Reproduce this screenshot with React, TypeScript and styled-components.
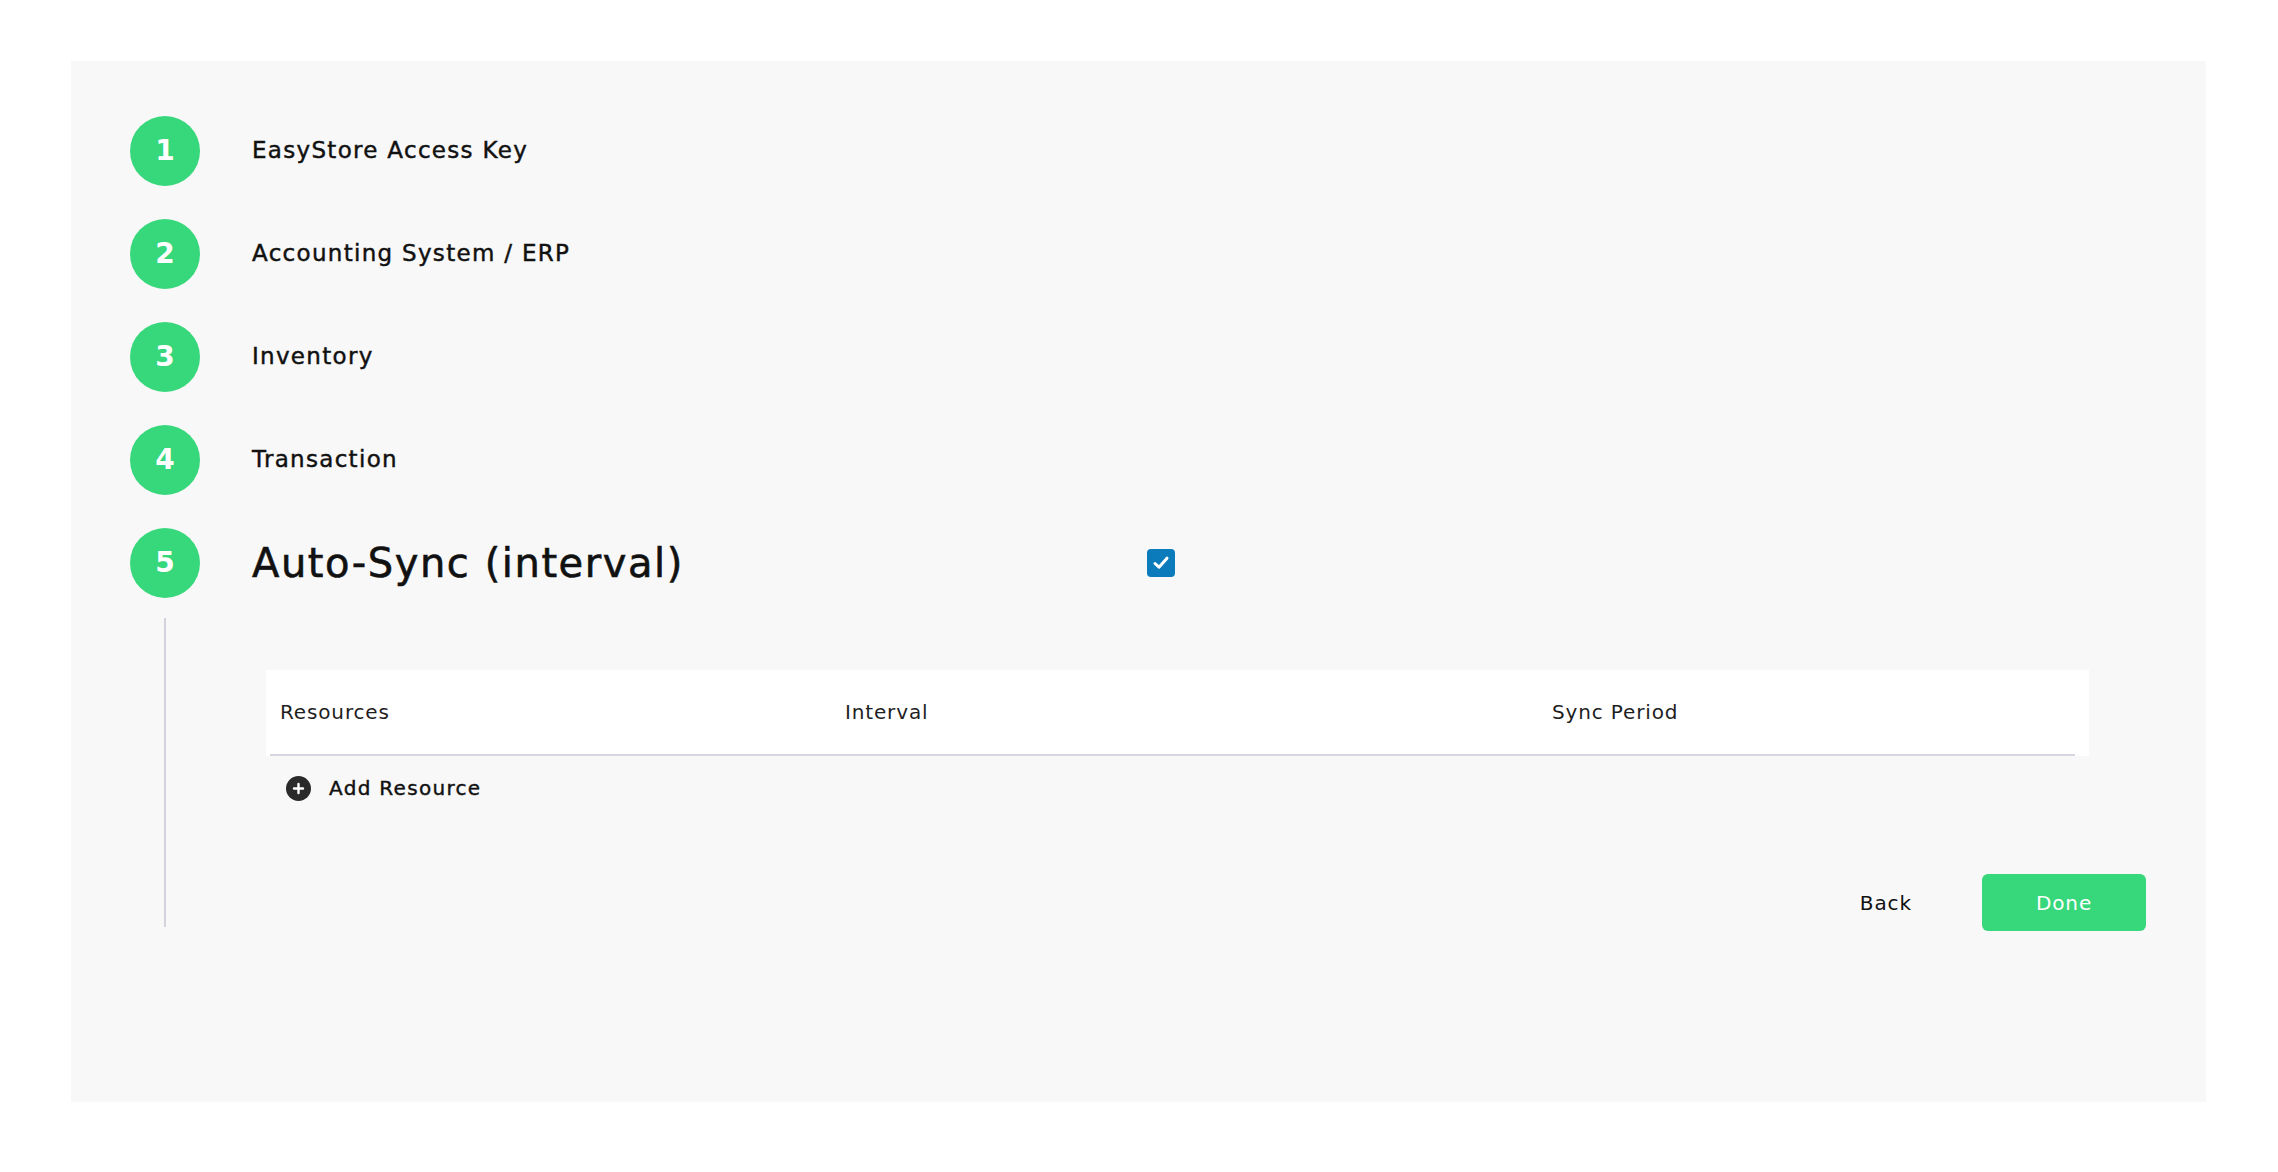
import React from "react";
import styled, { createGlobalStyle } from "styled-components";

const GlobalStyle = createGlobalStyle`
  html, body {
    margin: 0;
    padding: 0;
    background: #ffffff;
  }
  body {
    font-family: "DejaVu Sans", "Open Sans", sans-serif;
    color: #111111;
  }
  * { box-sizing: border-box; }
`;

const Panel = styled.main`
  margin: 61px 72px 0 71px;
  height: 1041px;
  background: #f8f8f8;
  padding: 55px 60px 0 59px;
  display: flex;
  flex-direction: column;
  gap: 33px;
`;

const StepRow = styled.div`
  display: flex;
  align-items: center;
  gap: 52px;
`;

const StepCircle = styled.div`
  flex: 0 0 70px;
  width: 70px;
  height: 70px;
  border-radius: 50%;
  background: #37d77b;
  color: #ffffff;
  display: flex;
  align-items: center;
  justify-content: center;
  font-family: "DejaVu Sans", sans-serif;
  font-weight: 700;
  font-size: 28px;
  line-height: 1;
`;

const StepLabel = styled.div<{ $big?: boolean }>`
  font-size: ${(p) => (p.$big ? "40px" : "23px")};
  letter-spacing: ${(p) => (p.$big ? "1.55px" : "1.3px")};
  font-weight: 400;
  color: #111111;
  line-height: 1.2;
  white-space: nowrap;
  -webkit-text-stroke: ${(p) => (p.$big ? "0.6px" : "0.45px")} #111111;
`;

const TitleBox = styled.div`
  flex: 0 0 895px;
  margin-right: -52px;
`;

const ActiveStep = styled.section`
  display: flex;
  flex-direction: column;
`;

const Body = styled.div`
  display: flex;
  margin-top: 20px;
`;

const Rail = styled.div`
  flex: 0 0 70px;
  display: flex;
  justify-content: center;
  padding-bottom: 4px;
`;

const RailLine = styled.div`
  width: 2px;
  background: #d3d3de;
`;

const Content = styled.div`
  flex: 1;
  padding: 52px 0 0 66px;
  display: flex;
  flex-direction: column;
`;

const Table = styled.div`
  margin-right: 57px;
  background: #ffffff;
`;

const HeaderRow = styled.div`
  display: grid;
  grid-template-columns: 565px 707px 1fr;
  height: 84px;
  align-items: center;
`;

const HeaderCell = styled.div`
  padding-left: 14px;
  font-size: 20px;
  letter-spacing: 0.85px;
  color: #1e1e1e;
`;

const Rule = styled.div`
  height: 2px;
  margin: 0 14px 0 4px;
  background: #d6d6e0;
`;

const AddRow = styled.button`
  margin-top: 19px;
  height: 26px;
  padding: 0 0 0 20px;
  border: none;
  background: transparent;
  display: flex;
  align-items: center;
  gap: 18px;
  font-family: "DejaVu Sans", sans-serif;
  font-size: 20px;
  letter-spacing: 1.3px;
  color: #111111;
  -webkit-text-stroke: 0.4px #111111;
  cursor: pointer;
  align-self: flex-start;
`;

const PlusIcon = styled.span`
  width: 25px;
  height: 25px;
  border-radius: 50%;
  background: #2a2a2a;
  display: inline-flex;
  align-items: center;
  justify-content: center;
`;

const Footer = styled.div`
  margin-top: 73px;
  display: flex;
  justify-content: flex-end;
  align-items: center;
  gap: 70px;
`;

const BackButton = styled.button`
  border: none;
  background: transparent;
  padding: 0;
  font-family: "DejaVu Sans", sans-serif;
  font-size: 20px;
  letter-spacing: 0.9px;
  color: #111111;
  cursor: pointer;
`;

const DoneButton = styled.button`
  width: 164px;
  height: 57px;
  border: none;
  border-radius: 6px;
  background: #37d77b;
  color: #ffffff;
  font-family: "DejaVu Sans", sans-serif;
  font-size: 20px;
  letter-spacing: 0.9px;
  cursor: pointer;
`;

const CheckBox = styled.span`
  width: 28px;
  height: 28px;
  border-radius: 4px;
  background: #0b7bbb;
  display: inline-flex;
  align-items: center;
  justify-content: center;
`;

const steps = [
  "EasyStore Access Key",
  "Accounting System / ERP",
  "Inventory",
  "Transaction",
];

export default function App() {
  return (
    <>
      <GlobalStyle />
      <Panel>
        {steps.map((s, i) => (
          <StepRow key={s}>
            <StepCircle>{i + 1}</StepCircle>
            <StepLabel>{s}</StepLabel>
          </StepRow>
        ))}
        <ActiveStep>
          <StepRow>
            <StepCircle>5</StepCircle>
            <TitleBox>
              <StepLabel $big>Auto-Sync (interval)</StepLabel>
            </TitleBox>
            <CheckBox role="checkbox" aria-checked="true">
              <svg width="20" height="20" viewBox="0 0 20 20" fill="none">
                <path
                  d="M4 10.5 L8 14.2 L16 5.2"
                  stroke="#ffffff"
                  strokeWidth="3"
                  strokeLinecap="round"
                  strokeLinejoin="round"
                />
              </svg>
            </CheckBox>
          </StepRow>
          <Body>
            <Rail>
              <RailLine />
            </Rail>
            <Content>
              <Table>
                <HeaderRow>
                  <HeaderCell>Resources</HeaderCell>
                  <HeaderCell>Interval</HeaderCell>
                  <HeaderCell>Sync Period</HeaderCell>
                </HeaderRow>
                <Rule />
              </Table>
              <AddRow type="button">
                <PlusIcon>
                  <svg width="13" height="13" viewBox="0 0 13 13">
                    <path
                      d="M6.5 2 V11 M2 6.5 H11"
                      stroke="#ffffff"
                      strokeWidth="2.4"
                      strokeLinecap="round"
                    />
                  </svg>
                </PlusIcon>
                Add Resource
              </AddRow>
              <Footer>
                <BackButton type="button">Back</BackButton>
                <DoneButton type="button">Done</DoneButton>
              </Footer>
            </Content>
          </Body>
        </ActiveStep>
      </Panel>
    </>
  );
}
